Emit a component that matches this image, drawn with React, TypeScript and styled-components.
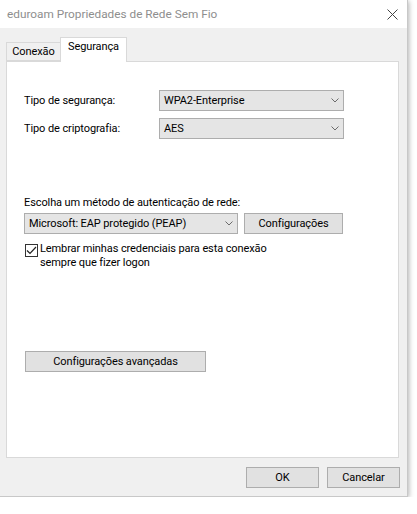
import React from "react";
import styled, { createGlobalStyle } from "styled-components";

const Global = createGlobalStyle`
  html, body { margin: 0; padding: 0; background: #ffffff; }
  body { font-family: Roboto, "Noto Sans", sans-serif; font-size: 11px; letter-spacing: -0.1px; color: #000; }
  * { box-sizing: border-box; }
`;

const Window = styled.div`
  width: 408px;
  height: 497px;
  background: #f0f0f0;
  display: flex;
  flex-direction: column;
  box-shadow: 1px 1px 5px rgba(0,0,0,0.3);
  border-right: 1px solid #c8c8c8;
  border-bottom: 1px solid #c8c8c8;
`;

const TitleBar = styled.div`
  height: 28px;
  background: #ffffff;
  display: flex;
  align-items: center;
  justify-content: space-between;
  padding: 0 9px 0 7px;
`;

const Title = styled.span`
  font-size: 11.8px;
  letter-spacing: 0;
  color: #8e8e8e;
`;

const Body = styled.div`
  flex: 1;
  display: flex;
  flex-direction: column;
  padding: 9px 8px 0 6px;
`;

const TabStrip = styled.div`
  display: flex;
  align-items: flex-end;
  height: 24px;
  position: relative;
  z-index: 1;
`;

const Tab = styled.div<{ $active?: boolean; $w: number }>`
  width: ${(p) => p.$w}px;
  height: ${(p) => (p.$active ? 25 : 19)}px;
  margin-bottom: ${(p) => (p.$active ? -1 : 0)}px;
  padding-top: 2px;
  text-align: center;
  background: ${(p) => (p.$active ? "#ffffff" : "#f0f0f0")};
  border: 1px solid #d9d9d9;
  border-bottom: ${(p) => (p.$active ? "none" : "1px solid #d9d9d9")};
  ${(p) => (p.$active ? "" : "border-right: none;")}
  line-height: 14px;
`;

const Panel = styled.div`
  height: 397px;
  background: #ffffff;
  border: 1px solid #d9d9d9;
  display: flex;
  flex-direction: column;
  padding: 28px 0 0 17px;
`;

const Row = styled.div<{ $mt?: number }>`
  display: flex;
  align-items: center;
  margin-top: ${(p) => p.$mt ?? 0}px;
`;

const Label = styled.div`
  width: 135px;
`;

const Select = styled.div<{ $w: number }>`
  width: ${(p) => p.$w}px;
  height: 21px;
  background: #e5e5e5;
  border: 1px solid #adadad;
  display: flex;
  align-items: center;
  justify-content: space-between;
  padding: 0 1px 0 4px;
`;

const Button = styled.div<{ $w: number }>`
  width: ${(p) => p.$w}px;
  height: 21px;
  background: #e1e1e1;
  border: 1px solid #adadad;
  display: flex;
  align-items: center;
  justify-content: center;
`;

const Text = styled.div<{ $mt?: number }>`
  margin-top: ${(p) => p.$mt ?? 0}px;
  line-height: 14px;
`;

const CheckRow = styled.div`
  display: flex;
  align-items: flex-start;
  margin-top: 8px;
  margin-left: 1px;
`;

const Box = styled.div`
  width: 13px;
  height: 13px;
  border: 1px solid #333;
  background: #fff;
  display: flex;
  align-items: center;
  justify-content: center;
  margin-right: 2px;
  margin-top: 2px;
  flex: none;
`;

const Footer = styled.div`
  display: flex;
  justify-content: flex-end;
  gap: 8px;
  padding-top: 9px;
  margin-right: -1px;
`;

const Chevron = () => (
  <svg width="14" height="5" viewBox="0 0 14 5">
    <path d="M3.5 0.5 L7 4 L10.5 0.5" fill="none" stroke="#6b6b6b" strokeWidth="1" />
  </svg>
);

export default function App() {
  return (
    <>
      <Global />
      <Window>
        <TitleBar>
          <Title>eduroam Propriedades de Rede Sem Fio</Title>
          <svg width="11" height="11" viewBox="0 0 11 11">
            <path d="M0.5 0.5 L10.5 10.5 M10.5 0.5 L0.5 10.5" stroke="#444" strokeWidth="1" />
          </svg>
        </TitleBar>
        <Body>
          <TabStrip>
            <Tab $w={54}>Conexão</Tab>
            <Tab $w={67} $active>Segurança</Tab>
          </TabStrip>
          <Panel>
            <Row>
              <Label>Tipo de segurança:</Label>
              <Select $w={185}>
                <span>WPA2-Enterprise</span>
                <Chevron />
              </Select>
            </Row>
            <Row $mt={7}>
              <Label>Tipo de criptografia:</Label>
              <Select $w={185}>
                <span>AES</span>
                <Chevron />
              </Select>
            </Row>
            <Text $mt={57}>Escolha um método de autenticação de rede:</Text>
            <Row $mt={3}>
              <Select $w={214}>
                <span>Microsoft: EAP protegido (PEAP)</span>
                <Chevron />
              </Select>
              <Button $w={99} style={{ marginLeft: 6 }}>Configurações</Button>
            </Row>
            <CheckRow>
              <Box>
                <svg width="11" height="9" viewBox="0 0 11 9">
                  <path d="M1 4.5 L4 7.5 L10 1" fill="none" stroke="#222" strokeWidth="1.2" />
                </svg>
              </Box>
              <Text>
                Lembrar minhas credenciais para esta conexão
                <br />
                sempre que fizer logon
              </Text>
            </CheckRow>
            <Row $mt={81}>
              <Button $w={181} style={{ marginLeft: 1 }}>Configurações avançadas</Button>
            </Row>
          </Panel>
          <Footer>
            <Button $w={73}>OK</Button>
            <Button $w={73}>Cancelar</Button>
          </Footer>
        </Body>
      </Window>
    </>
  );
}
